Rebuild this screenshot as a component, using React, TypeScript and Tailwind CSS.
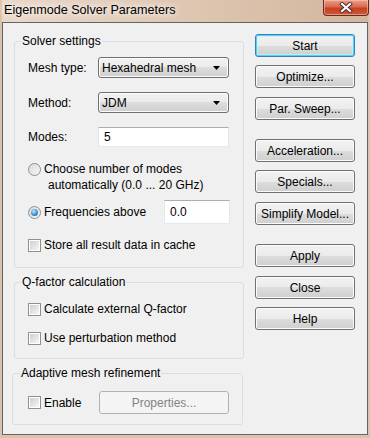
import React from 'react';

const font = "font-['Liberation_Sans',Arial,sans-serif]";

const Btn = ({ label, className = '', primary = false, disabled = false }: { label: string; className?: string; primary?: boolean; disabled?: boolean }) => (
    <div
        className={`flex items-center justify-center rounded-[3px] border text-[12px] leading-none ${
            disabled
                ? 'border-[#adb2b5] bg-[#f4f4f4] text-[#838383]'
                : primary
                ? 'border-[#3c7fb1] bg-[linear-gradient(#f2f2f2_0%,#ebebeb_50%,#dddddd_50%,#cfcfcf_100%)] shadow-[inset_0_0_0_1px_#48d6fb,inset_0_0_0_2px_rgba(200,240,255,0.6)] text-black'
                : 'border-[#707070] bg-[linear-gradient(#f2f2f2_0%,#ebebeb_50%,#dddddd_50%,#cfcfcf_100%)] shadow-[inset_0_0_0_1px_#fcfcfc] text-black'
        } ${className}`}
    >
        {label}
    </div>
);

const Select = ({ value }: { value: string }) => (
    <div className="flex h-[21px] w-[131px] items-center justify-between rounded-[3px] border border-[#707070] bg-[linear-gradient(#f2f2f2_0%,#ebebeb_50%,#dddddd_50%,#cfcfcf_100%)] pl-[3px] pr-[8px] shadow-[inset_0_0_0_1px_#fcfcfc]">
        <span>{value}</span>
        <svg width="7" height="4" viewBox="0 0 7 4"><path d="M0 0h7L3.5 4z" fill="#000" /></svg>
    </div>
);

const Input = ({ value, className = '' }: { value: string; className?: string }) => (
    <div className={`flex items-center border border-[#e3e9ef] border-t-[#abadb3] bg-white pl-[5px] ${className}`}>{value}</div>
);

const Radio = ({ checked = false }: { checked?: boolean }) => (
    <div className="flex h-[13px] w-[13px] shrink-0 items-center justify-center rounded-full border border-[#8e8f8f] bg-[linear-gradient(135deg,#dadada,#f7f7f7)]">
        {checked && <div className="h-[7px] w-[7px] rounded-full bg-[radial-gradient(circle_at_40%_35%,#bfe9fd,#3d8fd6_55%,#15508f)]" />}
    </div>
);

const Check = () => (
    <div className="flex h-[13px] w-[13px] shrink-0 items-center justify-center border border-[#8e8f8f] bg-white">
        <div className="h-[9px] w-[9px] bg-[linear-gradient(135deg,#cfcfcf,#f6f6f6)]" />
    </div>
);

const CheckRow = ({ label, className = '' }: { label: string; className?: string }) => (
    <div className={`flex h-[14px] items-center gap-[3px] ${className}`}>
        <Check />
        <span>{label}</span>
    </div>
);

const App = () => {
    return (
        <div className={`h-[438px] w-[370px] overflow-hidden bg-[#dcc2ab] px-[2px] pb-[3px] text-[12px] text-black ${font}`}>
            {/* title bar */}
            <div className="flex h-[22px] items-start justify-between bg-[linear-gradient(90deg,#e9d8c9,#dcc3ad_60%,#d3b69e)]">
                <span className="pl-[2px] pt-[3px] text-[12.6px] leading-[15px] [text-shadow:0_0_6px_#fff,0_0_10px_#fff]">Eigenmode Solver Parameters</span>
                <div className="mr-[-1px] flex h-[16px] w-[46px] items-center justify-center rounded-b-[4px] border border-t-0 border-[#6b2a1f] bg-[linear-gradient(#eaa08c_0%,#d9694f_45%,#c8401f_55%,#c95a3a_100%)] shadow-[inset_0_0_0_1px_rgba(255,210,190,0.5)]">
                    <svg width="14" height="11" viewBox="0 0 14 11">
                        <path d="M3 2l8 7M11 2l-8 7" stroke="#4a2a28" strokeWidth="4" strokeLinecap="square" />
                        <path d="M3 2l8 7M11 2l-8 7" stroke="#fff" strokeWidth="2.2" strokeLinecap="square" />
                    </svg>
                </div>
            </div>

            {/* client area */}
            <div className="flex h-[413px] border border-[#646464] bg-[#f0f0f0] pl-[11px] pt-[11px]">
                <div className="flex w-[230px] flex-col">
                    <fieldset className="rounded-[3px] border border-[#d5dfe5] pb-[15px]">
                        <legend className="ml-[6px] px-[1px] leading-[14px]">Solver settings</legend>
                        <div className="pl-[13px]">
                            <div className="mt-[9px] flex h-[21px] items-center">
                                <span className="w-[70px]">Mesh type:</span>
                                <Select value="Hexahedral mesh" />
                            </div>
                            <div className="mt-[14px] flex h-[21px] items-center">
                                <span className="w-[70px]">Method:</span>
                                <Select value="JDM" />
                            </div>
                            <div className="mt-[14px] flex h-[20px] items-center">
                                <span className="w-[70px]">Modes:</span>
                                <Input value="5" className="h-[20px] w-[131px]" />
                            </div>
                            <div className="mt-[14px] leading-[16px]">
                                <div className="flex h-[16px] items-center gap-[3px]">
                                    <Radio />
                                    <span>Choose number of modes</span>
                                </div>
                                <div className="pl-[20px]">automatically (0.0 ... 20 GHz)</div>
                            </div>
                            <div className="mt-[7px] flex h-[24px] items-center">
                                <div className="flex w-[136px] items-center gap-[3px]">
                                    <Radio checked />
                                    <span>Frequencies above</span>
                                </div>
                                <Input value="0.0" className="h-[24px] w-[66px]" />
                            </div>
                            <CheckRow label="Store all result data in cache" className="mt-[14px]" />
                        </div>
                    </fieldset>

                    <fieldset className="mt-[7px] rounded-[3px] border border-[#d5dfe5] pb-[13px]">
                        <legend className="ml-[6px] px-[1px] leading-[14px]">Q-factor calculation</legend>
                        <div className="pl-[13px]">
                            <CheckRow label="Calculate external Q-factor" className="mt-[13px]" />
                            <CheckRow label="Use perturbation method" className="mt-[15px]" />
                        </div>
                    </fieldset>

                    <fieldset className="ml-[-2px] mt-[7px] w-[231px] rounded-[3px] border border-[#d5dfe5] pb-[10px]">
                        <legend className="ml-[7px] px-[1px] leading-[14px]">Adaptive mesh refinement</legend>
                        <div className="mt-[11px] flex h-[23px] items-center pl-[15px]">
                            <div className="flex w-[71px] items-center gap-[3px]">
                                <Check />
                                <span>Enable</span>
                            </div>
                            <Btn label="Properties..." disabled className="h-[23px] w-[130px]" />
                        </div>
                    </fieldset>
                </div>

                <div className="ml-[11px] flex w-[100px] flex-col">
                    <Btn label="Start" primary className="h-[23px]" />
                    <Btn label="Optimize..." className="mt-[8px] h-[23px]" />
                    <Btn label="Par. Sweep..." className="mt-[9px] h-[23px]" />
                    <Btn label="Acceleration..." className="mt-[19px] h-[23px]" />
                    <Btn label="Specials..." className="mt-[8px] h-[23px]" />
                    <Btn label="Simplify Model..." className="mt-[9px] h-[23px]" />
                    <Btn label="Apply" className="mt-[19px] h-[23px]" />
                    <Btn label="Close" className="mt-[9px] h-[23px]" />
                    <Btn label="Help" className="mt-[8px] h-[23px]" />
                </div>
            </div>
        </div>
    );
};

export default App;
